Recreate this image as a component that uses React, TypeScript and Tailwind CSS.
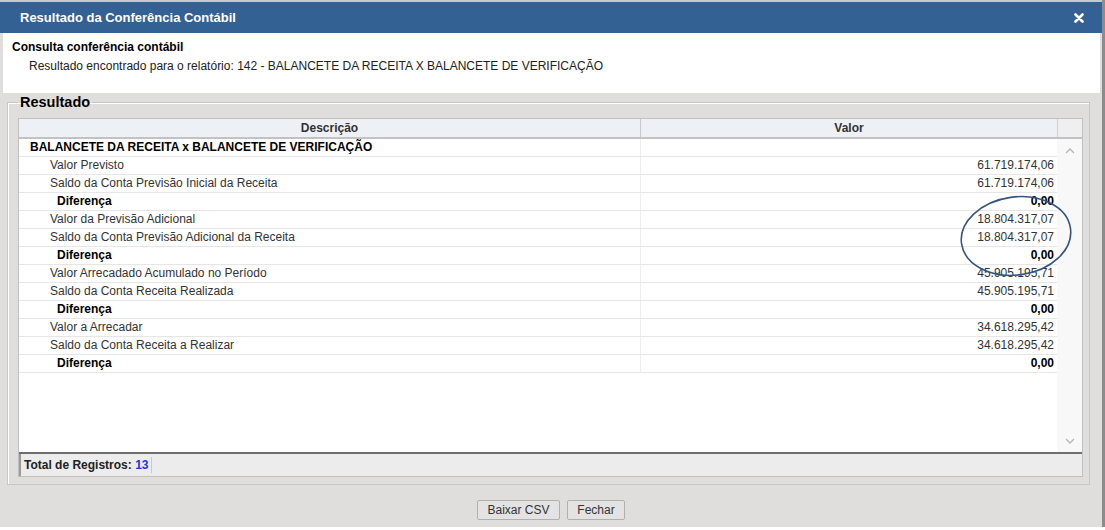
import React from "react";

type Row = { label: string; value: string; kind: "head" | "item" | "diff" };

const rows: Row[] = [
  { label: "BALANCETE DA RECEITA x BALANCETE DE VERIFICAÇÃO", value: "", kind: "head" },
  { label: "Valor Previsto", value: "61.719.174,06", kind: "item" },
  { label: "Saldo da Conta Previsão Inicial da Receita", value: "61.719.174,06", kind: "item" },
  { label: "Diferença", value: "0,00", kind: "diff" },
  { label: "Valor da Previsão Adicional", value: "18.804.317,07", kind: "item" },
  { label: "Saldo da Conta Previsão Adicional da Receita", value: "18.804.317,07", kind: "item" },
  { label: "Diferença", value: "0,00", kind: "diff" },
  { label: "Valor Arrecadado Acumulado no Período", value: "45.905.195,71", kind: "item" },
  { label: "Saldo da Conta Receita Realizada", value: "45.905.195,71", kind: "item" },
  { label: "Diferença", value: "0,00", kind: "diff" },
  { label: "Valor a Arrecadar", value: "34.618.295,42", kind: "item" },
  { label: "Saldo da Conta Receita a Realizar", value: "34.618.295,42", kind: "item" },
  { label: "Diferença", value: "0,00", kind: "diff" },
];

function Chevron({ up }: { up?: boolean }) {
  return (
    <svg width="10" height="6" viewBox="0 0 10 6" className="text-[#b8b8b8]">
      <path
        d={up ? "M1 5L5 1L9 5" : "M1 1L5 5L9 1"}
        fill="none"
        stroke="currentColor"
        strokeWidth="1.4"
      />
    </svg>
  );
}

export default function App() {
  return (
    <div className="w-[1105px] h-[530px] bg-white overflow-hidden font-['Liberation_Sans',Arial,sans-serif] relative">
      <div className="w-[1102px] h-[527px] bg-[#e0dedc] border-t-2 border-[#c9c9c9] flex flex-col">
        {/* Title bar */}
        <div className="h-[31px] bg-[#336193] flex items-center justify-between pl-5 pr-[18px]">
          <span className="text-white text-[13px] font-bold">Resultado da Conferência Contábil</span>
          <svg width="10" height="10" viewBox="0 0 10 10">
            <path d="M1.5 1.5L8.5 8.5M8.5 1.5L1.5 8.5" stroke="white" strokeWidth="2.6" strokeLinecap="round" />
          </svg>
        </div>

        {/* Header info */}
        <div className="ml-[3px] mr-[2px] h-[60px] bg-white pl-[9px] pt-[7px] text-[12px] leading-[14px]">
          <div className="font-bold text-black">Consulta conferência contábil</div>
          <div className="text-[#222] pl-[17px] pt-[5px]">
            Resultado encontrado para o relatório: 142 - BALANCETE DA RECEITA X BALANCETE DE VERIFICAÇÃO
          </div>
        </div>

        {/* Fieldset */}
        <fieldset className="ml-[7px] mr-[12px] mt-[2px] border border-[#c6c6c6] shadow-[inset_1px_1px_0_#fff] pl-[10px] pr-[6px] pb-[7px]">
          <legend className="ml-0 px-[2px] text-[14.5px] font-bold text-black leading-[15px]">Resultado</legend>

          <div className="border border-[#c0c0c0] bg-white flex flex-col mt-[8px]">
            {/* Grid header */}
            <div className="flex h-[20px] bg-[#edf0f5] border-b-2 border-[#c2c2c2] text-[12px] font-bold text-[#333]">
              <div className="w-[622px] flex items-center justify-center border-r border-[#c8c8c8]">Descrição</div>
              <div className="w-[416px] flex items-center justify-center">Valor</div>
              <div className="flex-1 bg-[#efefef] border-l border-[#d0d0d0]"></div>
            </div>

            {/* Grid body */}
            <div className="flex h-[315px] border-b-2 border-[#6e6e6e]">
              <div className="w-[1038px] flex flex-col">
                {rows.map((r, i) => (
                  <div
                    key={i}
                    className="flex h-[18px] border-b border-[#e6e6e6] text-[12px] leading-[17px]"
                  >
                    <div
                      className={
                        r.kind === "head"
                          ? "w-[622px] pl-[11px] font-bold text-black border-r border-[#eeeeee]"
                          : r.kind === "diff"
                          ? "w-[622px] pl-[38px] font-bold text-black border-r border-[#eeeeee]"
                          : "w-[622px] pl-[31px] text-[#333] border-r border-[#eeeeee]"
                      }
                    >
                      {r.label}
                    </div>
                    <div
                      className={
                        r.kind === "diff"
                          ? "w-[416px] text-right pr-[3px] font-bold text-black"
                          : "w-[416px] text-right pr-[3px] text-[#333]"
                      }
                    >
                      {r.value}
                    </div>
                  </div>
                ))}
              </div>
              <div className="flex-1 bg-[#f8f8f8] flex flex-col items-center justify-between pt-[9px] pb-[8px]">
                <Chevron up />
                <Chevron />
              </div>
            </div>

            {/* Footer */}
            <div className="h-[22px] bg-[#ececec] flex items-center text-[12px] font-bold text-[#222] pl-[3px] border-l-2 border-[#9a9a9a]">
              <span className="pr-[3px] border-r border-[#c8c8c8] leading-[16px]">
                Total de Registros: <span className="text-[#2233ee]">13</span>
              </span>
            </div>
          </div>
        </fieldset>

        {/* Buttons */}
        <div className="flex justify-center gap-[7px] mt-[15px] text-[12px] text-[#333]">
          <button className="w-[83px] h-[20px] bg-[#e3e3e3] border border-[#b0b0b0] rounded-[2px]">Baixar CSV</button>
          <button className="w-[58px] h-[20px] bg-[#e3e3e3] border border-[#b0b0b0] rounded-[2px]">Fechar</button>
        </div>
      </div>

      {/* Right edge */}
      <div className="absolute top-0 right-0 w-[3px] h-[527px] bg-[#8c8c8c]"></div>

      {/* Hand drawn ellipse annotation */}
      <svg className="absolute left-[955px] top-[190px]" width="125" height="95" viewBox="0 0 125 95">
        <ellipse
          cx="61"
          cy="46"
          rx="55"
          ry="39"
          transform="rotate(-8 61 46)"
          fill="none"
          stroke="#34557f"
          strokeWidth="1.6"
        />
      </svg>
    </div>
  );
}
